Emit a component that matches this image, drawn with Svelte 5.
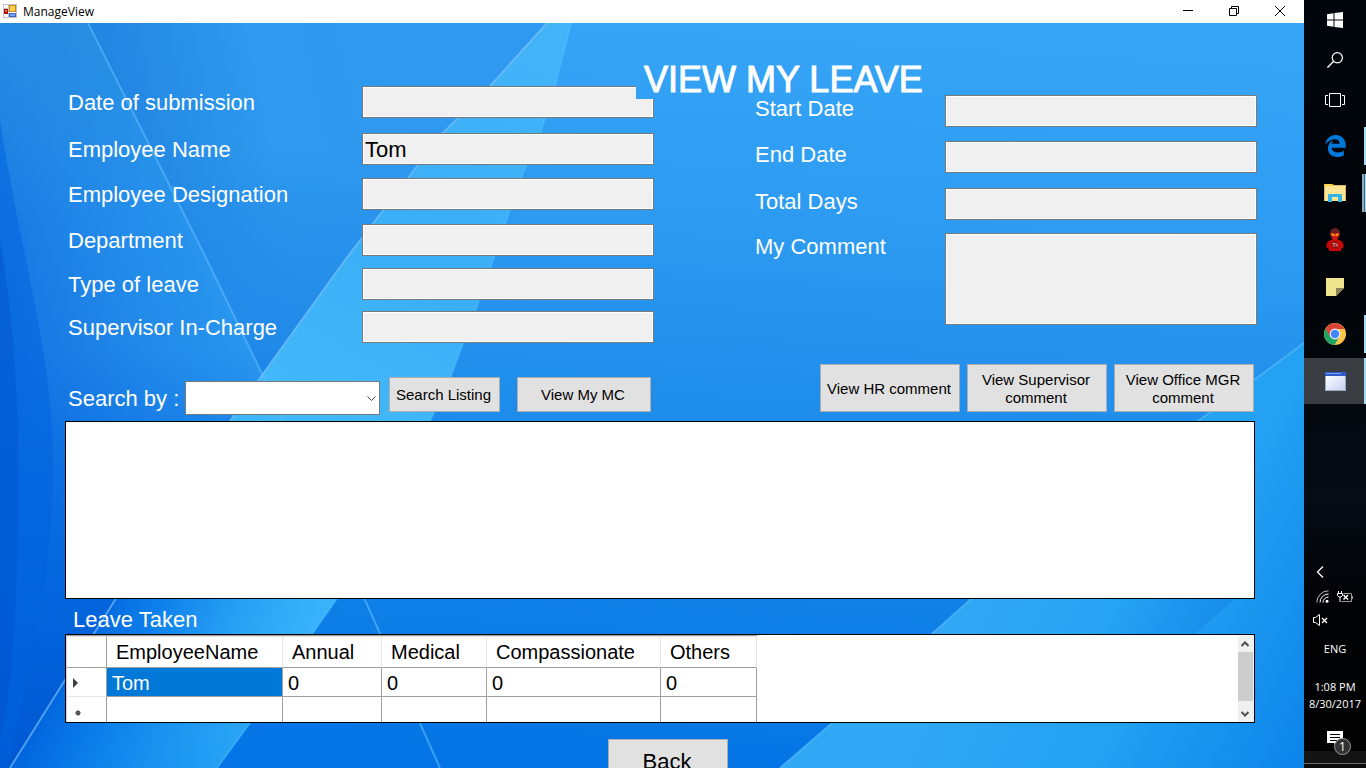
<script>
  const details = [
    { id: 'submitted', label: 'Date of submission', value: '' },
    { id: 'name', label: 'Employee Name', value: 'Tom' },
    { id: 'designation', label: 'Employee Designation', value: '' },
    { id: 'department', label: 'Department', value: '' },
    { id: 'type', label: 'Type of leave', value: '' },
    { id: 'supervisor', label: 'Supervisor In-Charge', value: '' }
  ];
  const period = [
    { id: 'start', label: 'Start Date' },
    { id: 'end', label: 'End Date' },
    { id: 'total', label: 'Total Days' }
  ];
  const columns = ['EmployeeName', 'Annual', 'Medical', 'Compassionate', 'Others'];
  const rows = [['Tom', '0', '0', '0', '0']];
</script>

<div class="screen">
  <div class="window">
    <header class="titlebar">
      <svg class="appicon" viewBox="0 0 14 14" width="14" height="14" aria-hidden="true">
        <rect width="14" height="14" fill="#c4c4c4" />
        <rect x="1" y="1" width="4" height="3" fill="#fff" /><rect x="1" y="10" width="4" height="3" fill="#fff" />
        <rect x="5" y="8" width="8" height="1" fill="#fff" />
        <rect x="1" y="5" width="4" height="5" fill="#a8100c" /><rect x="2" y="6" width="2" height="2" fill="#e8604c" />
        <rect x="6" y="1" width="7" height="7" fill="#c98a10" /><rect x="7" y="2" width="5" height="5" fill="#fcd04c" />
        <rect x="6" y="9" width="7" height="4" fill="#3a68c8" /><rect x="7" y="10" width="5" height="2" fill="#78a8f4" />
      </svg>
      <span class="caption">ManageView</span>
      <button class="wbtn" aria-label="Minimize"><svg viewBox="0 0 10 10" width="10" height="10"><path d="M0 4.500H10" stroke="#000" /></svg></button>
      <button class="wbtn" aria-label="Restore"><svg viewBox="0 0 10 10" width="10" height="10"><path d="M.5 2.500h7v7h-7zM2.500 2.500v-2h7v7h-2" fill="none" stroke="#000" /></svg></button>
      <button class="wbtn" aria-label="Close"><svg viewBox="0 0 10 10" width="10" height="10"><path d="M0 0L10 10M10 0L0 10" stroke="#000" /></svg></button>
    </header>

    <main>
      <svg class="wallpaper" viewBox="0 23 1304 745" preserveAspectRatio="none" aria-hidden="true">
        <defs>
          <linearGradient id="base" x1="0.55" y1="0" x2="0.45" y2="1">
            <stop offset="0" stop-color="#36a5f7" /><stop offset="0.3" stop-color="#2b99f0" />
            <stop offset="0.52" stop-color="#1e8cea" /><stop offset="0.8" stop-color="#0e7fe6" /><stop offset="1" stop-color="#0474e6" />
          </linearGradient>
          <linearGradient id="left" gradientUnits="userSpaceOnUse" x1="0" y1="330" x2="260" y2="240">
            <stop offset="0" stop-color="#1474e2" /><stop offset="0.4" stop-color="#2086e8" /><stop offset="1" stop-color="#2c9cf0" />
          </linearGradient>
          <linearGradient id="wedge" gradientUnits="userSpaceOnUse" x1="120" y1="120" x2="400" y2="60">
            <stop offset="0" stop-color="#2286e2" /><stop offset="0.5" stop-color="#2e99ee" /><stop offset="1" stop-color="#2f98f0" />
          </linearGradient>
          <linearGradient id="wedgeFoot" gradientUnits="userSpaceOnUse" x1="300" y1="60" x2="300" y2="360">
            <stop offset="0.3" stop-color="#2088e8" stop-opacity="0" /><stop offset="1" stop-color="#2088e8" />
          </linearGradient>
          <linearGradient id="topLeft" gradientUnits="userSpaceOnUse" x1="0" y1="23" x2="0" y2="220">
            <stop offset="0" stop-color="#278cdf" stop-opacity="0.8" /><stop offset="1" stop-color="#278cdf" stop-opacity="0" />
          </linearGradient>
          <linearGradient id="sink" gradientUnits="userSpaceOnUse" x1="0" y1="350" x2="0" y2="768">
            <stop offset="0" stop-color="#0068e2" stop-opacity="0" /><stop offset="0.6" stop-color="#0062dc" stop-opacity="0.85" /><stop offset="1" stop-color="#0058d2" />
          </linearGradient>
          <linearGradient id="beam" gradientUnits="userSpaceOnUse" x1="540" y1="30" x2="120" y2="760">
            <stop offset="0" stop-color="#43b4fa" /><stop offset="0.3" stop-color="#3aaef6" /><stop offset="0.52" stop-color="#42b8fa" />
            <stop offset="0.8" stop-color="#38b2fa" /><stop offset="1" stop-color="#1e9cf2" />
          </linearGradient>
          <linearGradient id="beamShade" gradientUnits="userSpaceOnUse" x1="80" y1="620" x2="280" y2="720">
            <stop offset="0" stop-color="#0062dc" /><stop offset="0.3" stop-color="#0878e8" stop-opacity="0.85" /><stop offset="1" stop-color="#1f9cf4" stop-opacity="0" />
          </linearGradient>
          <linearGradient id="swoosh" gradientUnits="userSpaceOnUse" x1="980" y1="600" x2="1304" y2="768">
            <stop offset="0" stop-color="#31a8f5" /><stop offset="0.5" stop-color="#22a0f2" /><stop offset="1" stop-color="#0c84ea" />
          </linearGradient>
          <linearGradient id="shadow" gradientUnits="userSpaceOnUse" x1="1120" y1="600" x2="1200" y2="640">
            <stop offset="0" stop-color="#168cea" stop-opacity="0" /><stop offset="1" stop-color="#168cea" stop-opacity="0.8" />
          </linearGradient>
        </defs>
        <rect y="23" width="1304" height="745" fill="url(#base)" />
        <path d="M0 23H547L262 375L10 768H0Z" fill="url(#left)" />
        <path d="M0 23H88L190 220H0Z" fill="url(#topLeft)" />
        <path d="M88 23H547L408 178L345 260L262 375L207 260Z" fill="url(#wedge)" />
        <path d="M88 23H547L408 178L345 260L262 375L207 260Z" fill="url(#wedgeFoot)" />
        <path d="M0 350H280L230 421L115 600L10 768H0Z" fill="url(#sink)" />
        <path d="M0 120C18 240 48 340 52 430C58 560 30 670 8 768H0Z" fill="#0062de" opacity="0.5" />
        <path d="M0 240C16 330 20 430 18 520C16 640 10 700 0 740Z" fill="#004fc8" opacity="0.4" />
        <path id="ray" d="M571 23L555 86L540 134L520 180L493 260L475 312L450 378L430 421C400 490 370 545 336 600L250 723L217 768H10L115 600L230 421L262 375L345 260L408 178L442 134L490 86L547 23Z" fill="url(#beam)" />
        <path d="M217 768H10L115 600L210 452L418 452C400 500 370 545 336 600L250 723Z" fill="url(#beamShade)" />
        <path d="M571 23L555 86L540 134L520 180L493 260L475 312L450 378L430 421C400 490 370 545 336 600L250 723L217 768" fill="none" stroke="#52c0ff" stroke-width="2" opacity="0.5" />
        <path d="M547 23L490 86L442 134L408 178L345 260L262 375L230 421L115 600L10 768" fill="none" stroke="#80c4fa" stroke-width="2" opacity="0.6" />
        <path d="M88 23L207 260L265 380L365 600L440 768" fill="none" stroke="#5cbcff" stroke-width="2" opacity="0.6" />
        <path d="M780 768L832 723L971 599C1050 530 1110 490 1198 421L1254 380L1304 343V768Z" fill="url(#swoosh)" />
        <path d="M780 768L832 723L971 599C1050 530 1110 490 1198 421L1254 380L1304 343" fill="none" stroke="#5cbdfa" stroke-width="2" opacity="0.6" />
        <path d="M1245 590L1195 634L1100 634L1100 590Z" fill="url(#shadow)" />
      </svg>

      <h1>VIEW MY LEAVE</h1>

      <form class="forms">
        <div class="fields details">
          {#each details as f}
            <label for={f.id}>{f.label}</label>
            <input id={f.id} class:notched={f.id === 'submitted'} value={f.value} readonly />
          {/each}
        </div>
        <div class="fields period">
          {#each period as f}
            <label for={f.id}>{f.label}</label>
            <input id={f.id} readonly />
          {/each}
          <label for="comment">My Comment</label>
          <textarea id="comment" readonly></textarea>
        </div>
      </form>

      <div class="tools">
        <label for="search">Search by :</label>
        <span class="combo">
          <select id="search"><option></option></select>
          <svg viewBox="0 0 9 6" width="9" height="6" aria-hidden="true"><path d="M.5 .5L4.500 4.500L8.500 .5" fill="none" stroke="#444" /></svg>
        </span>
        <button class="btn listing">Search Listing</button>
        <button class="btn mc">View My MC</button>
        <div class="comments">
          <button class="btn">View HR comment</button>
          <button class="btn">View Supervisor comment</button>
          <button class="btn">View Office MGR comment</button>
        </div>
      </div>

      <section class="results" aria-label="Listing"></section>

      <h2>Leave Taken</h2>
      <section class="grid">
        <table>
          <colgroup><col class="c0" /><col class="c1" /><col class="c2" /><col class="c3" /><col class="c4" /><col class="c5" /></colgroup>
          <thead>
            <tr><th></th>{#each columns as c}<th>{c}</th>{/each}</tr>
          </thead>
          <tbody>
            {#each rows as row}
              <tr>
                <th><svg viewBox="0 0 6 10" width="6" height="10" aria-hidden="true"><path d="M0 0L5 5L0 10Z" fill="#404040" /></svg></th>
                {#each row as cell, i}<td class:selected={i === 0}>{cell}</td>{/each}
              </tr>
            {/each}
            <tr class="blank">
              <th><svg viewBox="0 0 6 6" width="10" height="6" aria-hidden="true"><circle cx="3" cy="3" r="2.200" fill="#404040" /><path d="M3 0V6M0 3H6M1 1L5 5M5 1L1 5" stroke="#606060" /></svg></th>
              {#each columns as c}<td></td>{/each}
            </tr>
          </tbody>
        </table>
        <div class="scroll">
          <button aria-label="Scroll up"><svg viewBox="0 0 8 6" width="8" height="6"><path d="M.5 5L4 1.500L7.500 5" fill="none" stroke="#505050" stroke-width="2" /></svg></button>
          <div class="thumb"></div>
          <button aria-label="Scroll down"><svg viewBox="0 0 8 6" width="8" height="6"><path d="M.5 1L4 4.500L7.500 1" fill="none" stroke="#505050" stroke-width="2" /></svg></button>
        </div>
      </section>

      <button class="btn back">Back</button>
    </main>
  </div>

  <nav class="taskbar" aria-label="Taskbar">
    <button class="sys" aria-label="Start"><svg viewBox="0 0 16 16" width="16" height="16"><path d="M0 2.200L6.500 1.300V7.500H0ZM7.500 1.100L16 0V7.500H7.500ZM0 8.500H6.500V14.700L0 13.800ZM7.500 8.500H16V16L7.500 14.900Z" fill="#fff" /></svg></button>
    <button class="sys" aria-label="Search"><svg viewBox="0 0 16 16" width="16" height="16"><circle cx="10.300" cy="5.700" r="5.100" fill="none" stroke="#fff" stroke-width="1.200" /><path d="M6.700 9.300L.4 15.600" stroke="#fff" stroke-width="1.400" /></svg></button>
    <button class="sys" aria-label="Task View"><svg viewBox="0 0 20 14" width="20" height="14"><path d="M4.500 .5H15.500V13.500H4.500ZM3 2.500H.5V11.500H3M17 2.500H19.500V11.500H17" fill="none" stroke="#fff" /></svg></button>

    <div class="apps">
      <button class="run" aria-label="Edge"><svg viewBox="25 8 462 496" width="21" height="22"><path d="M486.286 243.671c0-44.032-7.754-84.465-28.801-122.405C416.498 47.879 343.912 8.001 258.893 8.001 118.962 7.724 40.617 113.214 26.056 227.679c42.429-61.312 117.073-121.376 220.375-124.966 0 0 109.666 0 99.419 104.957H169.997c6.369-37.386 18.554-58.986 34.339-78.926-75.048 34.893-121.85 96.096-120.742 188.315.83 71.448 50.124 144.836 120.743 171.976 83.357 31.847 192.776 7.200 240.132-21.324V363.307c-80.864 56.494-270.871 60.925-272.255-67.572h314.073v-52.064z" fill="#0078d7" /></svg></button>
      <button class="run multi" aria-label="File Explorer"><svg viewBox="0 0 22 18" width="22" height="18"><path d="M0 0H9V1H22V17H0Z" fill="#d8b868" /><path d="M1 2H21V17H1Z" fill="#ffe694" /><path d="M0 0H9L10 2H0Z" fill="#f5c518" /><path d="M2 1H7" stroke="#fff0a8" /><path d="M4 18V11Q4 10 5 10H17Q18 10 18 11V18H14V13H8V18Z" fill="#36b3e8" /></svg></button>
      <button aria-label="Messenger"><svg viewBox="0 0 18 24" width="18" height="24"><path d="M3 13C0 15 0 18 1 20L3 21V23H15V21L17 20C18 18 18 15 15 13L11 11H7Z" fill="#c80808" /><ellipse cx="9" cy="5.500" rx="5" ry="5.500" fill="#6a2020" /><path d="M4.500 5H13.500L12 10L10.500 12H7.500L6 10Z" fill="#d01410" /><path d="M5.500 6L8.500 7.500M12.500 6L9.500 7.500" stroke="#f0b020" stroke-width="1.500" /><circle cx="9" cy="17" r="3.500" fill="#901414" /><path d="M6.500 15.500H9.500M8 15.500V19M9.500 17H11.500M11 15.500V18.500" stroke="#d89090" /></svg></button>
      <button aria-label="Sticky Notes"><svg viewBox="0 0 18 18" width="18" height="18"><path d="M0 0H18V10L10 18H0Z" fill="#f0e48c" /><path d="M10 18V10H18Z" fill="#8a8458" /></svg></button>
      <button class="run" aria-label="Chrome"><svg viewBox="0 0 22 22" width="22" height="22"><circle cx="11" cy="11" r="11" fill="#fbc645" /><path d="M11 11L5.800 14L1.500 5.500A11 11 0 0 1 20.500 6L11 6Z" fill="#db4437" /><path d="M1.500 5.500A11 11 0 0 0 10.500 22L15.500 13.500L11 16L6.200 13.800Z" fill="#1da462" /><circle cx="11" cy="11" r="5.400" fill="#e8eefa" /><circle cx="11" cy="11" r="4.200" fill="#4285f4" /></svg></button>
      <button class="run active" aria-label="ManageView"><svg viewBox="0 0 21 19" width="21" height="19"><defs><linearGradient id="pane" x1="0" y1="0" x2="1" y2="1"><stop offset="0" stop-color="#fff" /><stop offset="1" stop-color="#c4d0f0" /></linearGradient></defs><rect width="21" height="19" fill="#9aa8c0" /><rect width="21" height="4" fill="#2c5ccc" /><rect x="1" y="1" width="15" height="1" fill="#7aa0f0" /><rect x="1" y="4" width="19" height="14" fill="url(#pane)" /></svg></button>
    </div>

    <div class="tray">
      <svg class="chev" viewBox="0 0 8 12" width="8" height="12" aria-hidden="true"><path d="M7 .5L1.500 6L7 11.500" fill="none" stroke="#fff" stroke-width="1.300" /></svg>
      <div class="status">
        <svg viewBox="0 0 13 13" width="13" height="13" aria-hidden="true"><g fill="none" stroke="#fff"><path d="M.8 12.500A11.700 11.700 0 0 1 12.500 .8" stroke="#bbb" /><path d="M4 12.500A8.500 8.500 0 0 1 12.500 4" /><path d="M7 12.500A5.500 5.500 0 0 1 12.500 7" /></g><circle cx="11" cy="11.200" r="1.500" fill="#fff" /></svg>
        <svg viewBox="0 0 16 12" width="16" height="12" aria-hidden="true"><path d="M1.500 0V2M4.500 0V2M.5 2.500H5.500V4.500L4 6H2L.5 4.500ZM3 6V11" fill="none" stroke="#fff" /><path d="M6.500 2.500H14.500V10.500H4.500" fill="none" stroke="#999" /><path d="M15.500 5V8" stroke="#999" /><path d="M6.500 4L11 8.500M11 4L6.500 8.500" stroke="#fff" stroke-width="1.500" /></svg>
      </div>
      <svg class="vol" viewBox="0 0 15 12" width="15" height="12" aria-hidden="true"><path d="M.5 3.500H2.500L6.500 .5V11.500L2.500 8.500H.5Z" fill="none" stroke="#fff" /><path d="M9 4L14 9M14 4L9 9" stroke="#fff" stroke-width="1.300" /></svg>
      <span class="lang">ENG</span>
      <time>1:08 PM<br />8/30/2017</time>
      <button class="note" aria-label="1 new notification">
        <svg viewBox="0 0 16 16" width="16" height="16" aria-hidden="true"><path d="M0 0H16V12H11V16L7 12H0Z" fill="#fff" /><path d="M3 3.500H13M3 6.500H13M3 9.500H10" stroke="#000" /></svg>
        <span class="badge">1</span>
      </button>
    </div>
  </nav>
</div>

<style>
  :global(body) { margin: 0; overflow: hidden; }
  .screen, .screen * { box-sizing: border-box; }
  .screen { display: flex; height: 100vh; overflow: hidden; font-family: "Liberation Sans", Arial, sans-serif; font-size: 22px; color: #fff; background: #02060c; }
  button, input, select, textarea { font-family: inherit; margin: 0; border-radius: 0; }
  .window { flex: 1; min-width: 0; display: flex; flex-direction: column; }

  .titlebar { display: flex; align-items: center; height: 23px; flex: none; padding: 0 1px 2px 3px; background: #fff; color: #000; font: 12px/20px "Open Sans", "Noto Sans", sans-serif; }
  .caption { flex: 1; padding: 2px 0 0 6px; }
  .wbtn { width: 46px; height: 20px; padding: 0; border: 0; background: none; display: grid; place-items: center; }

  main { position: relative; isolation: isolate; flex: 1; min-height: 0; overflow: hidden; display: flex; flex-direction: column; padding: 38px 49px 0 65px; }
  main > :global(*) { flex: none; }
  .wallpaper { position: absolute; inset: 0; width: 100%; height: 100%; z-index: -1; }
  h1 { margin: 0 0 0 579px; font-size: 36px; line-height: 38px; font-weight: normal; white-space: nowrap; -webkit-text-stroke: 1px #fff; }

  .forms { display: grid; grid-template-columns: 589fr 502fr; gap: 101px; align-items: start; margin: -13px -2px 0 0; }
  .fields { display: grid; }
  .details { grid-template: 47px 45px 46px 44px 43px 32px / 297px 1fr; line-height: 34px; }
  .period { grid-template: 46px 47px 45px 92px / 190px 1fr; line-height: 28px; margin-top: 9px; }
  .details label { padding-left: 3px; }
  input, textarea { width: 100%; height: 32px; padding: 2px 2px 0; border: 1px solid #7a7a7a; outline: 0; background: #f0f0f0; box-shadow: inset 0 0 0 1px #fff; font-size: 22px; color: #000; }
  textarea { height: 92px; resize: none; display: block; }
  .notched { clip-path: polygon(0 0, calc(100% - 18px) 0, calc(100% - 18px) 13px, 100% 13px, 100% 100%, 0 100%); }

  .tools { display: flex; align-items: flex-end; margin-top: 21px; height: 51px; }
  .tools label { width: 120px; padding-left: 3px; line-height: 32px; }
  .combo { position: relative; width: 195px; height: 34px; }
  .combo select { width: 100%; height: 100%; appearance: none; border: 1px solid #7a7a7a; background: #fff; font-size: 22px; }
  .combo svg { position: absolute; right: 4px; top: 15px; pointer-events: none; }
  .btn { padding: 1px 6px 0 4px; border: 1px solid #adadad; background: #e1e1e1; color: #000; font-size: 15px; line-height: 18px; }
  .listing, .mc { height: 35px; margin-bottom: 3px; }
  .listing { width: 111px; margin-left: 9px; padding: 0 2px 0 0; white-space: nowrap; }
  .mc { width: 134px; margin-left: 17px; }
  .comments { display: flex; gap: 7px; height: 48px; margin: 0 1px 3px auto; }
  .comments .btn { width: 140px; }

  .results { height: 178px; margin-top: 6px; border: 1px solid #000; background: #fff; }
  h2 { margin: 6px 0 0 8px; font-size: 22px; line-height: 29px; font-weight: normal; }

  .grid { display: flex; justify-content: space-between; height: 89px; border: 1px solid #000; background: #fff; color: #000; font-size: 20px; overflow: hidden; }
  table { table-layout: fixed; width: 691px; border-collapse: separate; border-spacing: 0; border-left: 1px solid #d0d0d0; border-top: 1px solid #a0a0a0; }
  .c0 { width: 40px; } .c1 { width: 176px; } .c2 { width: 99px; } .c3 { width: 105px; } .c4 { width: 174px; } .c5 { width: 96px; }
  th, td { padding: 2px 0 0 5px; text-align: left; font-weight: normal; line-height: 26px; height: 29px; border-right: 1px solid #a0a0a0; border-bottom: 1px solid #a0a0a0; }
  thead th { height: 32px; padding: 0 0 0 9px; border-right-color: #e5e5e5; border-top: 1px solid #e5e5e5; }
  thead th:first-child { border-right-color: #a0a0a0; }
  tbody th { padding-left: 6px; border-bottom-color: #e5e5e5; }
  tbody th svg { display: block; }
  .blank th svg { margin-top: 2px; }
  .selected { background: #0078d7; color: #fff; }
  .scroll { display: flex; flex-direction: column; width: 16px; background: #f0f0f0; }
  .scroll button { height: 17px; border: 0; padding: 0 2px 0 0; background: none; display: grid; place-items: center; }
  .scroll button:last-child { margin-top: auto; }
  .thumb { height: 49px; margin-right: 1px; background: #cdcdcd; }

  .back { align-self: center; width: 120px; height: 44px; margin: 16px 0 0 16px; font-size: 22px; line-height: 28px; }

  .taskbar { width: 62px; flex: none; display: flex; flex-direction: column; background: linear-gradient(#01060d, #010509 40%, #050c14 65%, #010204 80%, #020202); }
  .taskbar button { border: 0; padding: 0; background: none; display: grid; place-items: center; flex: none; }
  .sys { height: 40px; }
  .apps { display: flex; flex-direction: column; gap: 1px; margin-top: 3px; }
  .apps button { height: 46px; position: relative; }
  .apps .run::after { content: ""; position: absolute; right: 0; top: 4px; width: 2px; height: 38px; background: #a4dcf8; }
  .apps .multi::after { width: 4px; background: linear-gradient(90deg, #86aec2 2px, #4c6a7a 2px 3px, #a4dcf8 3px); }
  .apps .active { background: #3a3e43; }
  .apps .active::after { top: 0; height: 46px; }
  .tray { margin-top: auto; display: flex; flex-direction: column; align-items: center; font: 11px/17px "Open Sans", "Noto Sans", sans-serif; }
  .chev { margin-right: 30px; }
  .status { display: flex; align-items: center; gap: 8px; margin: 12px 0 0 -2px; }
  .vol { margin: 11px 30px 0 0; }
  .lang { margin-top: 14px; }
  time { margin-top: 21px; text-align: center; white-space: nowrap; }
  .taskbar .note { position: relative; width: 62px; height: 56px; padding: 0 0 2px; background: linear-gradient(transparent 39px, #141414 39px 51px, #707070 51px 52px, #0a0a0a 52px); }
  .badge { position: absolute; left: 30px; top: 26px; width: 17px; height: 17px; border: 1px solid #999; border-radius: 50%; background: #333; color: #fff; font: 12px/15px "Open Sans", "Noto Sans", sans-serif; text-align: center; }
</style>
